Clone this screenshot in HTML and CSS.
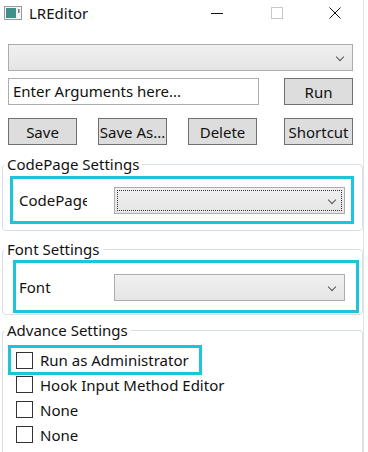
FILE: index.html
```html
<!DOCTYPE html>
<html lang="en">
<head>
    <meta charset="UTF-8">
    <meta name="viewport" content="width=device-width, initial-scale=1.0">
    <title>LREditor</title>
    <link rel="stylesheet" href="styles.css">
</head>
<body>
    <div id="window">
        <div class="titlebar">
            <svg class="app-icon" width="18" height="14" viewBox="0 0 18 14">
                <rect x="0.5" y="0.5" width="17" height="13" fill="#f4f4f4" stroke="#9a9a9a"/>
                <rect x="2" y="2" width="10" height="10" fill="#3f8f8c"/>
                <rect x="14" y="3" width="1.5" height="4" fill="#777"/>
            </svg>
            <span class="title">LREditor</span>
            <div class="caption-buttons">
                <svg width="14" height="14" viewBox="0 0 14 14"><line x1="1" y1="7.5" x2="13" y2="7.5" stroke="#111" stroke-width="1"/></svg>
                <svg width="14" height="14" viewBox="0 0 14 14"><rect x="1.5" y="1.5" width="11" height="11" fill="none" stroke="#c8c8c8"/></svg>
                <svg width="14" height="14" viewBox="0 0 14 14"><path d="M1.5 1.5 L12.5 12.5 M12.5 1.5 L1.5 12.5" stroke="#111" stroke-width="1"/></svg>
            </div>
        </div>

        <div class="content">
            <div class="combo wide"><span class="chev"></span></div>

            <div class="row">
                <div class="textbox">Enter Arguments here...</div>
                <button class="btn">Run</button>
            </div>

            <div class="row buttons">
                <button class="btn">Save</button>
                <button class="btn">Save As...</button>
                <button class="btn">Delete</button>
                <button class="btn shortcut">Shortcut</button>
            </div>
        </div>

        <fieldset class="group codepage">
            <legend>CodePage Settings</legend>
            <div class="highlight setting">
                <span class="label">CodePage</span>
                <div class="combo focused"><span class="chev"></span></div>
            </div>
        </fieldset>

        <fieldset class="group font">
            <legend>Font Settings</legend>
            <div class="highlight setting tall">
                <span class="label">Font</span>
                <div class="combo"><span class="chev"></span></div>
            </div>
        </fieldset>

        <fieldset class="group advance">
            <legend>Advance Settings</legend>
            <div class="highlight check-wrap">
                <label class="check"><span class="box"></span>Run as Administrator</label>
            </div>
            <label class="check"><span class="box"></span>Hook Input Method Editor</label>
            <label class="check"><span class="box"></span>None</label>
            <label class="check"><span class="box"></span>None</label>
        </fieldset>
    </div>
</body>
</html>
```

FILE: styles.css
```css
html, body {
    margin: 0;
    padding: 0;
    background: #fff;
}
body {
    font-family: "Noto Sans", "Open Sans", sans-serif;
    font-size: 15px;
    color: #111;
    overflow: hidden;
}
#window {
    width: 364px;
    height: 452px;
    border-right: 1px solid #e2e2e2;
    box-sizing: border-box;
}
.titlebar {
    height: 30px;
    display: flex;
    align-items: center;
    padding-left: 4px;
}
.app-icon { margin-top: -5px; }
.title { margin-left: 7px; margin-top: -4px; font-size: 15px; }
.caption-buttons {
    margin-left: auto;
    display: flex;
    gap: 44px;
    margin-right: 21px;
    margin-top: -4px;
}
.caption-buttons svg:first-child { margin-right: 2px; }
.content {
    padding: 14px 0 0 8px;
}
.combo {
    height: 27px;
    box-sizing: border-box;
    border: 1px solid #acacac;
    background: linear-gradient(#f0f0f0, #e5e5e5);
    position: relative;
}
.combo.wide { width: 345px; }
.chev {
    position: absolute;
    right: 9px;
    top: 9px;
    width: 5px;
    height: 5px;
    border-right: 1.5px solid #555;
    border-bottom: 1.5px solid #555;
    transform: rotate(45deg);
}
.combo.focused::after {
    content: "";
    position: absolute;
    inset: 2px;
    border: 1px dotted #333;
}
.row {
    display: flex;
    margin-top: 7px;
    width: 345px;
    justify-content: space-between;
}
.textbox {
    width: 251px;
    height: 27px;
    box-sizing: border-box;
    border: 1px solid #abadb3;
    padding: 1px 0 0 4px;
    line-height: 22px;
}
.btn {
    width: 69px;
    height: 27px;
    background: #dddddd;
    border: 1px solid #707070;
    font-family: inherit;
    font-size: 15px;
    color: #111;
    padding: 0;
    line-height: 24px;
}
.buttons {
    margin-top: 13px;
    justify-content: flex-start;
    gap: 21px;
}
.buttons .shortcut { margin-left: auto; }
.group {
    margin: 0 0 0 2px;
    width: 361px;
    box-sizing: border-box;
    border: 1px solid #d5dfe5;
    border-radius: 4px;
    padding: 0;
}
.group legend {
    margin-left: 1px;
    padding: 0 3px;
    line-height: 18px;
    font-size: 15px;
}
.codepage { margin-top: 10px; padding-bottom: 6px; }
.font { margin-top: 9px; padding-bottom: 1px; }
.advance { margin-top: 6px; height: 140px; border-bottom: none; }
.highlight {
    border: 3px solid #1cc5d9;
    box-sizing: border-box;
}
.setting {
    display: flex;
    align-items: center;
    margin: 3px 8px 0 7px;
    height: 48px;
}
.setting.tall {
    margin: 2px 3px 0 10px;
    height: 53px;
}
.setting .label {
    width: 68px;
    overflow: hidden;
    white-space: nowrap;
    margin-left: 6px;
    flex: none;
}
.setting.tall .label { margin-left: 3px; }
.setting .combo {
    width: 231px;
    margin-left: 27px;
    margin-top: 1px;
}
.check-wrap {
    width: 194px;
    height: 30px;
    margin: 6px 0 0 5px;
    display: flex;
    align-items: center;
}
.check-wrap .check { margin: 0 0 0 5px; height: auto; }
.check {
    display: flex;
    align-items: center;
    height: 25px;
    margin-left: 13px;
}
.check-wrap + .check { margin-top: -3px; }
.box {
    width: 17px;
    height: 17px;
    box-sizing: border-box;
    border: 1px solid #333;
    background: #fff;
    margin-right: 7px;
}
```
